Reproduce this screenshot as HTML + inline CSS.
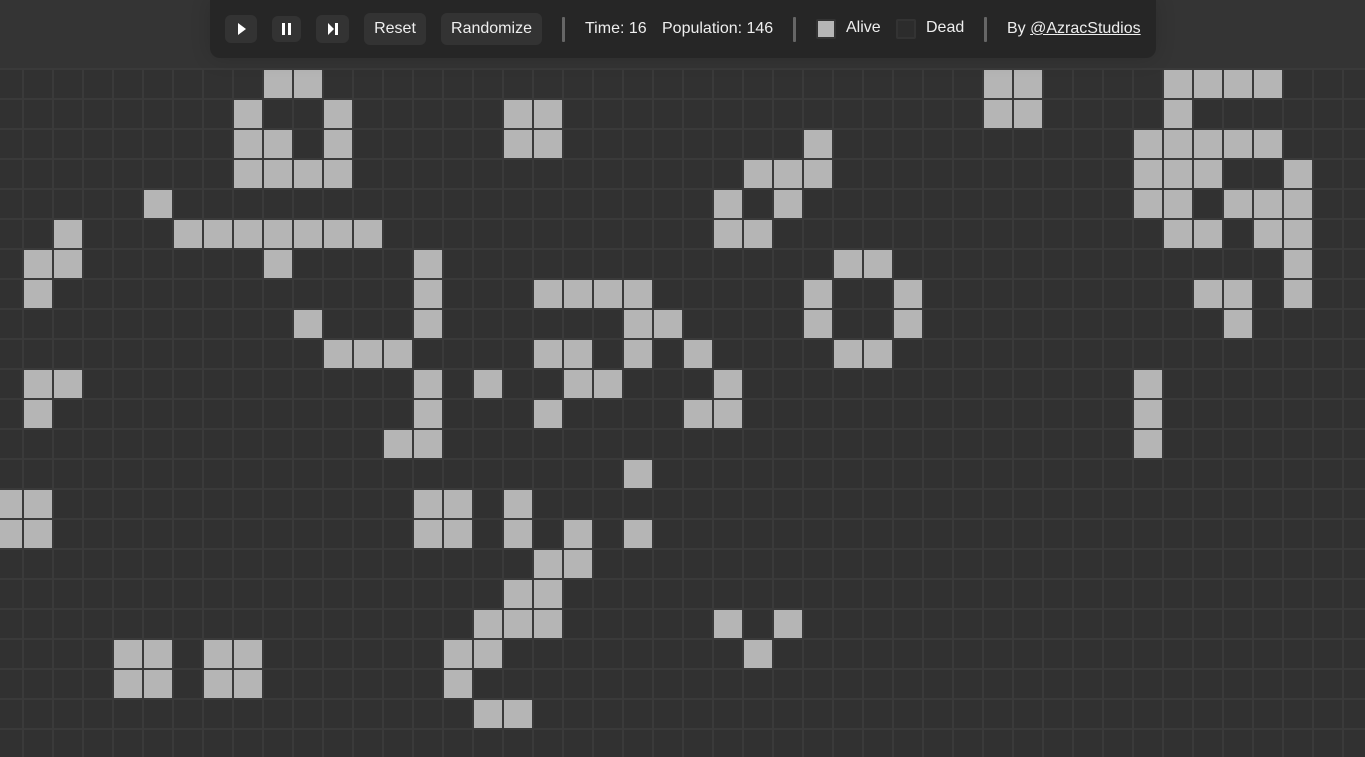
<!DOCTYPE html>
<html><head><style>
html,body{margin:0;padding:0;width:1365px;height:757px;overflow:hidden}
body{position:relative;background:#343434;font-family:"Liberation Sans",sans-serif;}
#grid{position:absolute;left:0;top:68px;width:1365px;height:689px;background-color:#313131;
background-image:linear-gradient(to right,transparent 22px,#3a3a3a 22px,#3a3a3a 24px,transparent 24px),linear-gradient(to bottom,#3a3a3a 0,#3a3a3a 2px,transparent 2px);
background-size:30px 30px;background-position:0 0,0 0;}
.c{position:absolute;width:28px;height:28px;background:#b5b5b5}
#bar{position:absolute;left:210px;top:0;width:946px;height:58px;background:#262626;border-radius:0 0 10px 10px;box-shadow:0 0 20px rgba(0,0,0,.15)}
.b{position:absolute;background:#333;border-radius:6px;color:#eee;font-size:16px;text-align:center}
.t{position:absolute;color:#eee;font-size:16px;top:20px;white-space:nowrap}
.sep{position:absolute;top:17px;width:3px;height:25px;background:#666;border-radius:1px}
.sw{position:absolute;top:19px;width:16px;height:16px;border:2px solid #333;border-radius:2px}
</style></head><body>
<div id="grid"></div>
<div id="bar">
<div class="b" style="left:15px;top:15px;width:32px;height:28px"><svg width="32" height="28"><path d="M13 8 L21 14 L13 20Z" fill="#fff"/></svg></div>
<div class="b" style="left:62px;top:16px;width:29px;height:26px"><svg width="29" height="26"><rect x="10" y="7" width="3" height="12" fill="#fff"/><rect x="16" y="7" width="3" height="12" fill="#fff"/></svg></div>
<div class="b" style="left:106px;top:15px;width:33px;height:28px"><svg width="33" height="28"><path d="M12 8 L18 14 L12 20Z" fill="#fff"/><rect x="19" y="8" width="3" height="12" fill="#fff"/></svg></div>
<div class="b" style="left:154px;top:13px;width:62px;height:32px;line-height:32px">Reset</div>
<div class="b" style="left:231px;top:13px;width:101px;height:32px;line-height:32px">Randomize</div>
<div class="sep" style="left:352px"></div>
<div class="t" style="left:375px">Time: 16</div>
<div class="t" style="left:452px">Population: 146</div>
<div class="sep" style="left:583px"></div>
<div class="sw" style="left:606px;background:#b5b5b5"></div>
<div class="t" style="left:636px;top:19px">Alive</div>
<div class="sw" style="left:686px;background:#2c2c2c"></div>
<div class="t" style="left:716px;top:19px">Dead</div>
<div class="sep" style="left:774px"></div>
<div class="t" style="left:797px">By <u>@AzracStudios</u></div>
</div>
<script>
var rows={0:[9,10,33,34,39,40,41,42],1:[8,11,17,18,33,34,39],2:[8,9,11,17,18,27,38,39,40,41,42],3:[8,9,10,11,25,26,27,38,39,40,43],4:[5,24,26,38,39,41,42,43],5:[2,6,7,8,9,10,11,12,24,25,39,40,42,43],6:[1,2,9,14,28,29,43],7:[1,14,18,19,20,21,27,30,40,41,43],8:[10,14,21,22,27,30,41],9:[11,12,13,18,19,21,23,28,29],10:[1,2,14,16,19,20,24,38],11:[1,14,18,23,24,38],12:[13,14,38],13:[21],14:[0,1,14,15,17],15:[0,1,14,15,17,19,21],16:[18,19],17:[17,18],18:[16,17,18,24,26],19:[4,5,7,8,15,16,25],20:[4,5,7,8,15],21:[16,17]};
var h='';for(var r in rows){rows[r].forEach(function(c){h+='<div class="c" style="left:'+(30*c-6)+'px;top:'+(70+30*r)+'px"></div>';});}
document.body.insertAdjacentHTML('afterbegin',h);
var g=document.getElementById('grid');document.body.insertBefore(g,document.body.firstChild);
</script>
</body></html>
